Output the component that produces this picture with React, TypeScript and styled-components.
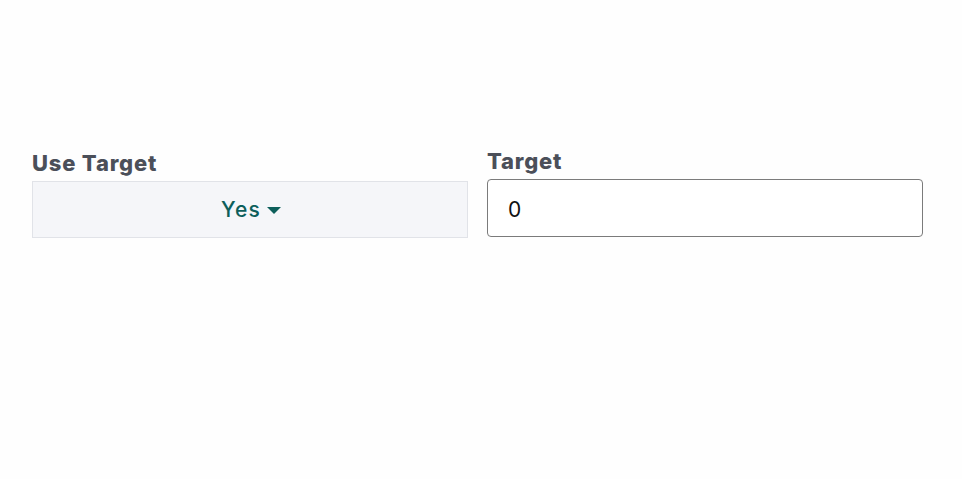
import React from 'react';
import styled, { createGlobalStyle } from 'styled-components';

const GlobalStyle = createGlobalStyle`
  html, body {
    margin: 0;
    padding: 0;
    background: #fefefe;
    font-family: Inter, "Liberation Sans", sans-serif;
  }
`;

const Page = styled.div`
  padding: 148px 39px 0 32px;
  display: grid;
  grid-template-columns: 436px 436px;
  column-gap: 19px;
  align-items: start;
`;

const Field = styled.div<{ $offset?: number }>`
  display: flex;
  flex-direction: column;
  margin-top: ${(p) => p.$offset ?? 0}px;
`;

const Label = styled.label`
  font-size: 22px;
  font-weight: 800;
  letter-spacing: 0.8px;
  color: #4b4f59;
  line-height: 26px;
  margin-bottom: 5px;
`;

const SelectButton = styled.button`
  height: 57px;
  width: 100%;
  background: #f5f6f9;
  border: 1px solid #e1e3e8;
  border-radius: 0;
  display: flex;
  align-items: center;
  justify-content: center;
  gap: 6px;
  padding: 0 0 0 2px;
  font-family: Inter, "Liberation Sans", sans-serif;
  font-size: 21px;
  font-weight: 500;
  letter-spacing: 1.2px;
  color: #0d5f5b;
  cursor: pointer;
`;

const Caret = styled.span`
  width: 0;
  height: 0;
  border-left: 7px solid transparent;
  border-right: 7px solid transparent;
  border-top: 7px solid #0d5f5b;
  margin-top: 1px;
`;

const Input = styled.input`
  box-sizing: border-box;
  height: 58px;
  width: 100%;
  border: 1.5px solid #7b7b7b;
  border-radius: 4px;
  padding: 2px 19px 0 20px;
  font-family: Inter, "Liberation Sans", sans-serif;
  font-size: 21px;
  color: #111;
  background: #fff;
  outline: none;
`;

export default function App() {
  return (
    <>
      <GlobalStyle />
      <Page>
        <Field $offset={2}>
          <Label>Use Target</Label>
          <SelectButton>
            Yes
            <Caret />
          </SelectButton>
        </Field>
        <Field>
          <Label>Target</Label>
          <Input defaultValue="0" />
        </Field>
      </Page>
    </>
  );
}
